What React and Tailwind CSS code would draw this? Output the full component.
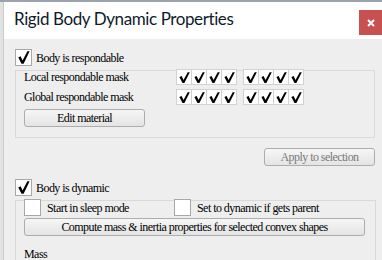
import React from "react";

const serif = { fontFamily: '"Liberation Serif", serif', letterSpacing: "-0.55px" };

function BigCheck({ checked }) {
  return (
    <div className="w-[17px] h-[17px] border border-[#a8a8a8] bg-white flex items-center justify-center shrink-0">
      {checked && (
        <svg width="15" height="15" viewBox="0 0 15 15">
          <path d="M2.3 7.4 L4.6 6.3 L6.6 10.6 L11.4 1.2 L13.6 1.2 L7.6 13.8 L5.5 13.8 Z" fill="#000" />
        </svg>
      )}
    </div>
  );
}

function MaskCell() {
  return (
    <div className="w-[16px] h-[16px] border border-[#d2d2d2] bg-white flex items-center justify-center -ml-px first:ml-0">
      <svg width="13" height="13" viewBox="0 0 13 13">
        <path d="M1.4 5.9 L3.6 5 L5.5 9 L9.7 1.3 L11.8 1.3 L6.4 11.9 L4.5 11.9 Z" fill="#000" />
      </svg>
    </div>
  );
}

function MaskGroup() {
  return (
    <div className="flex">
      <MaskCell />
      <MaskCell />
      <MaskCell />
      <MaskCell />
    </div>
  );
}

function Button({ children, className = "", disabled }) {
  return (
    <div
      className={`h-[18px] border border-[#adadad] rounded-[3px] bg-gradient-to-b from-[#f6f6f6] to-[#e4e4e4] flex items-center justify-center text-[12px] leading-none ${disabled ? "text-[#7a7a7a]" : "text-black"} ${className}`}
      style={serif}
    >
      {children}
    </div>
  );
}

export default function App() {
  return (
    <div className="w-[382px] h-[260px] overflow-hidden flex flex-col bg-[#eeeeee]">
      <div className="h-[2px] bg-[#9aa3ad] shrink-0" />
      <div className="flex flex-1 min-h-0">
        <div className="w-[4px] bg-[#e2e2e2] border-r border-[#cbcbcb] shrink-0" />
        <div className="flex-1 flex flex-col min-w-0">
          <div className="h-[37px] bg-white flex items-start shrink-0">
            <div
              className="pl-[10px] pt-[6px] text-[17px] leading-[22px] text-[#0f1a2a] tracking-[-0.4px]"
              style={{ fontFamily: 'Lato, sans-serif' }}
            >
              Rigid Body Dynamic Properties
            </div>
            <div className="ml-auto mt-[8px] w-[23px] h-[25px] bg-[#c75050] flex items-center justify-center">
              <svg width="8" height="8" viewBox="0 0 8 8">
                <path d="M1 1 L7 7 M7 1 L1 7" stroke="#fff" strokeWidth="2" />
              </svg>
            </div>
          </div>

          <div className="flex-1 pl-[11px] pr-[2px] text-[12px] text-black" style={serif}>
            <div className="flex items-center gap-[4px] mt-[10px]">
              <BigCheck checked />
              <span className="leading-none">Body is respondable</span>
            </div>

            <div className="mt-[4px] w-[360px] border border-[#d9d9d9] pl-[8px] pb-[10px]">
              <div className="flex items-center -mt-[2px]">
                <span className="w-[152px] leading-none">Local respondable mask</span>
                <div className="flex gap-[6px]">
                  <MaskGroup />
                  <MaskGroup />
                </div>
              </div>
              <div className="flex items-center mt-[4px]">
                <span className="w-[152px] leading-none">Global respondable mask</span>
                <div className="flex gap-[6px]">
                  <MaskGroup />
                  <MaskGroup />
                </div>
              </div>
              <Button className="mt-[4px] w-[121px]">Edit material</Button>
            </div>

            <div className="flex justify-end w-[360px] mt-[10px]">
              <Button className="w-[111px]" disabled>Apply to selection</Button>
            </div>

            <div className="flex items-center gap-[4px] mt-[13px]">
              <BigCheck checked />
              <span className="leading-none">Body is dynamic</span>
            </div>

            <div className="mt-[4px] w-[361px] h-[80px] border border-[#d9d9d9] pl-[8px]">
              <div className="flex items-center -mt-[2px]">
                <div className="flex items-center gap-[6px] w-[150px]">
                  <BigCheck />
                  <span className="leading-none">Start in sleep mode</span>
                </div>
                <div className="flex items-center gap-[6px]">
                  <BigCheck />
                  <span className="leading-none">Set to dynamic if gets parent</span>
                </div>
              </div>
              <Button className="mt-[2px] w-[341px]">Compute mass &amp; inertia properties for selected convex shapes</Button>
              <div className="mt-[12px] leading-none">Mass</div>
            </div>
          </div>
        </div>
      </div>
    </div>
  );
}
